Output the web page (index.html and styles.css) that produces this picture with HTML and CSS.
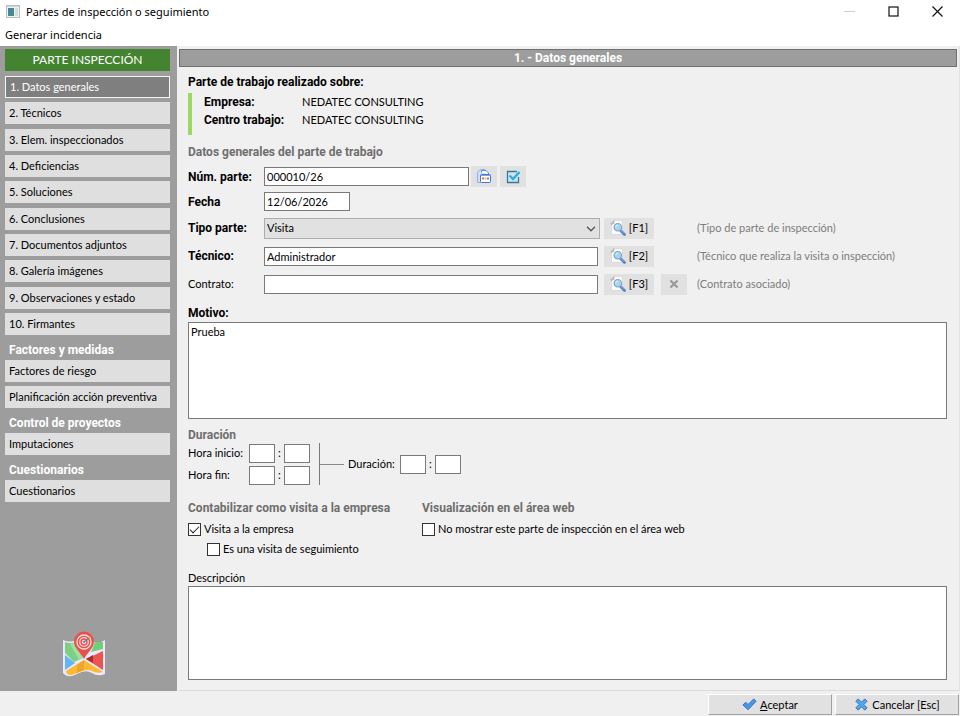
FILE: index.html
```
<!DOCTYPE html>
<html lang="es">
<head>
    <meta charset="UTF-8">
    <meta name="viewport" content="width=device-width, initial-scale=1.0">
    <title>Partes de inspección o seguimiento</title>
    <link rel="stylesheet" href="styles.css">
</head>
<body>
    <svg class="symbols" aria-hidden="true">
        <symbol id="icon-search" viewBox="0 0 16 16">
            <path d="M4.500 .5H12.500V14.500H1.500V3.500Z" fill="#fbfbfb" stroke="#dcdcdc"/>
            <path d="M1 4.500V3.500L4 .5V3.500Z" fill="#c4c4c4" stroke="#aaa" stroke-width=".6"/>
            <path d="M10.500 10.500L14.500 14.500" stroke="#4f7fc8" stroke-width="2.600" stroke-linecap="round"/>
            <path d="M10.500 10L14 13.500" stroke="#9cc0ee" stroke-width=".8"/>
            <circle cx="7.800" cy="7.200" r="3.700" fill="#a9d4ee" stroke="#7fa6c9" stroke-width="1.200"/>
            <path d="M5.800 7a2 2 0 0 1 2-2" fill="none" stroke="#e6f6ff"/>
        </symbol>
    </svg>

    <header class="titlebar">
        <svg class="app-icon" viewBox="0 0 14 13">
            <rect x=".5" y=".5" width="13" height="12" fill="#eef1f2" stroke="#b9bfc3"/>
            <rect x="1" y="1" width="12" height="1" fill="#ccd4da"/>
            <rect x="2" y="3" width="6" height="8" fill="#3f8f86"/>
            <rect x="2" y="3" width="3" height="5" fill="#4b7fa6"/>
            <rect x="9" y="3" width="3" height="8" fill="#d3dde0"/>
        </svg>
        <h1 class="title">Partes de inspección o seguimiento</h1>
        <div class="window-buttons">
            <button type="button" aria-label="Minimizar" disabled>
                <svg viewBox="0 0 11 11"><path d="M0 5.500H11" stroke="#cfcfcf"/></svg>
            </button>
            <button type="button" aria-label="Maximizar">
                <svg viewBox="0 0 11 11"><rect x="1" y="1" width="9" height="9" fill="none" stroke="#111" stroke-width="1.200"/></svg>
            </button>
            <button type="button" aria-label="Cerrar">
                <svg viewBox="0 0 11 11"><path d="M.5 .5L10.500 10.500M10.500 .5L.5 10.500" stroke="#111" stroke-width="1.200"/></svg>
            </button>
        </div>
    </header>

    <nav class="menubar">
        <button type="button">Generar incidencia</button>
    </nav>

    <div class="workspace">
        <aside class="sidebar">
            <h2 class="sidebar-title">PARTE INSPECCIÓN</h2>
            <nav class="nav-group sections">
                <button type="button" class="nav-item active">1. Datos generales</button>
                <button type="button" class="nav-item">2. Técnicos</button>
                <button type="button" class="nav-item">3. Elem. inspeccionados</button>
                <button type="button" class="nav-item">4. Deficiencias</button>
                <button type="button" class="nav-item">5. Soluciones</button>
                <button type="button" class="nav-item">6. Conclusiones</button>
                <button type="button" class="nav-item">7. Documentos adjuntos</button>
                <button type="button" class="nav-item">8. Galería imágenes</button>
                <button type="button" class="nav-item">9. Observaciones y estado</button>
                <button type="button" class="nav-item">10. Firmantes</button>
            </nav>
            <h3 class="nav-heading">Factores y medidas</h3>
            <nav class="nav-group">
                <button type="button" class="nav-item">Factores de riesgo</button>
                <button type="button" class="nav-item">Planificación acción preventiva</button>
            </nav>
            <h3 class="nav-heading">Control de proyectos</h3>
            <nav class="nav-group">
                <button type="button" class="nav-item">Imputaciones</button>
            </nav>
            <h3 class="nav-heading">Cuestionarios</h3>
            <nav class="nav-group">
                <button type="button" class="nav-item">Cuestionarios</button>
            </nav>
            <svg class="map-logo" viewBox="0 0 44 46">
                <path d="M1 9Q8 12 14 9T28 10T43 9V43Q36 46 30 42T15 43T1 42Z" fill="#e9e9fb"/>
                <path d="M3 11Q8 13 14 11L21 27L12 31L3 22Z" fill="#7bd081"/>
                <path d="M8 13L14 11L21 27L17 29Z" fill="#a0dfa3"/>
                <path d="M3 24L13 32L3 39Z" fill="#64b5f6"/>
                <path d="M33 11L41 11V18L29 21Z" fill="#6fd075"/>
                <path d="M41 20V39L24 28Z" fill="#ee5350"/>
                <path d="M24 28L31 24V32Z" fill="#a32f2f"/>
                <path d="M22 29L41 41Q35 43 30 40T15 42T4 40Z" fill="#fdb931"/>
                <path d="M15 34L22 29V39L15 42Z" fill="#eda62a"/>
                <path d="M22 28C19 22 12 17 12 10.500a10 10 0 0 1 20 0C32 17 25 22 22 28Z" fill="#ea4f4b"/>
                <g fill="none" stroke="#f9dedd" stroke-width="1.300">
                    <circle cx="22" cy="11" r="7"/>
                    <circle cx="22" cy="11" r="4.300"/>
                    <circle cx="22" cy="11" r="1.600"/>
                </g>
                <path d="M22 11L27 7" stroke="#6374b5" stroke-width="1.200"/>
                <path d="M26 7L28 5L29 7Z" fill="#f3b63c"/>
            </svg>
        </aside>

        <main class="panel">
            <h2 class="panel-title">1. - Datos generales</h2>
            <form class="form" id="parteForm">
                <h3 class="heading dark">Parte de trabajo realizado sobre:</h3>
                <dl class="company">
                    <dt>Empresa:</dt>
                    <dd>NEDATEC CONSULTING</dd>
                    <dt>Centro trabajo:</dt>
                    <dd>NEDATEC CONSULTING</dd>
                </dl>

                <h3 class="heading">Datos generales del parte de trabajo</h3>
                <div class="row">
                    <label class="bold" for="numero">Núm. parte:</label>
                    <input class="number" type="text" id="numero" value="000010/26">
                    <button type="button" class="icon-button" aria-label="Numeración">
                        <svg viewBox="0 0 16 16">
                            <path d="M1.500 3L5 .5H9V13.500H1.500Z" fill="#cfe0fb" stroke="#94b2e8"/>
                            <path d="M5.500 3.500V1.500H10L12.500 4V6" fill="#fff" stroke="#5c8edf"/>
                            <rect x="4.500" y="5.500" width="10" height="8" rx="1" fill="#fff" stroke="#3f77d4"/>
                            <path d="M5 6.500H14" stroke="#79a5ec" stroke-width="1"/>
                            <path d="M6 9.500H8" stroke="#e26d5c" stroke-width="2"/>
                            <path d="M8.500 9.500H10.500" stroke="#f3b64c" stroke-width="2"/>
                            <path d="M11 9.500H13" stroke="#7a7fe0" stroke-width="2"/>
                        </svg>
                    </button>
                    <button type="button" class="icon-button" aria-label="Validar número">
                        <svg viewBox="0 0 16 16">
                            <path d="M12 2.500H2.500V13.500H13.500V8" fill="none" stroke="#2f7ba5" stroke-width="1.300"/>
                            <path d="M4.500 6.500L8 10L14.500 3" fill="none" stroke="#1fb1ea" stroke-width="2.400"/>
                        </svg>
                    </button>
                </div>
                <div class="row">
                    <label class="bold" for="fecha">Fecha</label>
                    <input class="date" type="text" id="fecha" value="12/06/2026">
                </div>
                <div class="row lookup">
                    <label class="bold" for="tipo">Tipo parte:</label>
                    <div class="select-box">
                        <select id="tipo">
                            <option>Visita</option>
                        </select>
                        <svg class="chevron" viewBox="0 0 10 6"><path d="M1 .8L5 4.800L9 .8" fill="none" stroke="#555" stroke-width="1.300"/></svg>
                    </div>
                    <button type="button" class="key-button"><svg><use href="#icon-search"/></svg>[F1]</button>
                    <span class="note">(Tipo de parte de inspección)</span>
                </div>
                <div class="row lookup">
                    <label class="bold" for="tecnico">Técnico:</label>
                    <input class="wide" type="text" id="tecnico" value="Administrador">
                    <button type="button" class="key-button"><svg><use href="#icon-search"/></svg>[F2]</button>
                    <span class="note">(Técnico que realiza la visita o inspección)</span>
                </div>
                <div class="row lookup">
                    <label for="contrato">Contrato:</label>
                    <input class="wide" type="text" id="contrato">
                    <button type="button" class="key-button"><svg><use href="#icon-search"/></svg>[F3]</button>
                    <button type="button" class="icon-button clear" aria-label="Quitar contrato">
                        <svg viewBox="0 0 16 16"><path d="M4.500 4.500L11.500 11.500M11.500 4.500L4.500 11.500" stroke="#999" stroke-width="2.200"/></svg>
                    </button>
                    <span class="note">(Contrato asociado)</span>
                </div>

                <label class="area-label bold" for="motivo">Motivo:</label>
                <textarea class="motivo" id="motivo">Prueba</textarea>

                <h3 class="heading">Duración</h3>
                <div class="times">
                    <div class="time-rows">
                        <div class="time">
                            <label for="inicioHora">Hora inicio:</label>
                            <input type="text" id="inicioHora"><span>:</span><input type="text" aria-label="Minutos de inicio">
                        </div>
                        <div class="time">
                            <label for="finHora">Hora fin:</label>
                            <input type="text" id="finHora"><span>:</span><input type="text" aria-label="Minutos de fin">
                        </div>
                    </div>
                    <div class="bracket"></div>
                    <div class="time total">
                        <label for="duracionHora">Duración:</label>
                        <input type="text" id="duracionHora"><span>:</span><input type="text" aria-label="Minutos de duración">
                    </div>
                </div>

                <div class="options">
                    <section>
                        <h3 class="heading">Contabilizar como visita a la empresa</h3>
                        <label class="check"><input type="checkbox" checked>Visita a la empresa</label>
                        <label class="check sub"><input type="checkbox">Es una visita de seguimiento</label>
                    </section>
                    <section>
                        <h3 class="heading">Visualización en el área web</h3>
                        <label class="check"><input type="checkbox">No mostrar este parte de inspección en el área web</label>
                    </section>
                </div>

                <label class="area-label" for="descripcion">Descripción</label>
                <textarea class="descripcion" id="descripcion"></textarea>
            </form>
        </main>
    </div>

    <footer class="actions">
        <button type="submit" form="parteForm">
            <svg viewBox="0 0 16 16"><path d="M1 8.500L4 5.500L6.500 8L12.500 2L15 4.500L6.500 13.500Z" fill="#4a97ea" stroke="#2b6cc4"/></svg>
            <span><u>A</u>ceptar</span>
        </button>
        <button type="button">
            <svg viewBox="0 0 16 16"><path d="M2 4.500L4.500 2L8 5.500L11.500 2L14 4.500L10.500 8L14 11.500L11.500 14L8 10.500L4.500 14L2 11.500L5.500 8Z" fill="#55a5ea" stroke="#2b72b8"/></svg>
            <span>Cancelar [Esc]</span>
        </button>
    </footer>
</body>
</html>
```

FILE: styles.css
```
/* General */
* {
    box-sizing: border-box;
}

body {
    margin: 0;
    min-height: 100vh;
    display: flex;
    flex-direction: column;
    background: #f0f0f0;
    color: #000;
    font-family: Lato, Roboto, sans-serif;
    font-size: 11px;
    line-height: 18px;
}

h1, h2, h3, dl, dd {
    margin: 0;
    font-size: 11px;
}

button, input, select, textarea {
    font: inherit;
    color: inherit;
    margin: 0;
    border-radius: 0;
}

button {
    border: none;
    padding: 0;
    background: none;
}

svg {
    display: block;
}

.symbols {
    position: absolute;
    width: 0;
    height: 0;
}

.bold, .heading, .nav-heading, .panel-title, .company dt {
    font-family: Roboto, sans-serif;
    font-size: 12px;
    font-weight: bold;
}

/* Window frame */
.titlebar {
    display: flex;
    align-items: center;
    height: 23px;
    padding-left: 6px;
    background: #fff;
}

.app-icon {
    width: 14px;
    height: 13px;
    margin-right: 6px;
}

.title {
    flex: 1;
    font-family: "Noto Sans", sans-serif;
    font-weight: normal;
}

.window-buttons {
    display: flex;
    margin-right: 1px;
}

.window-buttons button {
    width: 44px;
    height: 22px;
    display: flex;
    align-items: center;
    justify-content: center;
}

.window-buttons svg {
    width: 11px;
    height: 11px;
}

.menubar {
    height: 23px;
    padding-left: 5px;
    background: #fff;
    font-family: "Noto Sans", sans-serif;
}

.menubar button {
    line-height: 24px;
}

.workspace {
    flex: 1;
    display: flex;
}

/* Sidebar */
.sidebar {
    width: 177px;
    flex-shrink: 0;
    display: flex;
    flex-direction: column;
    padding: 3px 7px 14px 5px;
    background: #9d9d9d;
}

.sidebar-title {
    margin-bottom: 5px;
    background: #44832f;
    color: #fff;
    font-size: 12px;
    font-weight: normal;
    line-height: 22px;
    text-align: center;
}

.nav-group {
    display: flex;
    flex-direction: column;
    gap: 4px;
}

.nav-group.sections {
    min-height: 259px;
    justify-content: space-between;
}

.nav-item {
    height: 22px;
    padding: 0 4px;
    background: #dfdfdf;
    text-align: left;
}

.nav-item.active {
    border: 1px solid #f4f4f4;
    background: #7f7f7f;
    color: #fff;
}

.nav-heading {
    padding: 6px 4px 1px;
    color: #fff;
}

.map-logo {
    width: 44px;
    height: 46px;
    margin: auto auto 0 57px;
}

/* Main panel */
.panel {
    flex: 1;
    display: flex;
    flex-direction: column;
    margin-left: 2px;
    padding-top: 3px;
    border-right: 1px solid #e2e2e2;
    border-bottom: 1px solid #dcdcdc;
}

.panel-title {
    margin-right: 2px;
    border: 1px solid #707070;
    background: #9d9d9d;
    color: #fff;
    line-height: 16px;
    text-align: center;
}

.form {
    flex: 1;
    display: flex;
    flex-direction: column;
    padding: 7px 12px 10px 9px;
}

.heading {
    color: #6e6e6e;
    line-height: 16px;
}

.heading.dark {
    color: #000;
}

.company {
    display: grid;
    grid-template-columns: 98px 1fr;
    margin: 3px 0 9px;
    padding: 0 0 6px 12px;
    border-left: 4px solid #9bd864;
}

.heading + .row {
    margin-top: 4px;
}

.row {
    display: flex;
    align-items: center;
    min-height: 25px;
}

.row > label {
    width: 76px;
}

.row.lookup {
    min-height: 28px;
}

input[type="text"], textarea {
    padding: 0 2px;
    border: 1px solid #7a7a7a;
    background: #fff;
    outline: none;
}

input[type="text"] {
    height: 19px;
}

.number {
    width: 205px;
    margin-right: 2px;
}

.date {
    width: 86px;
}

.wide {
    width: 334px;
    margin-right: 6px;
}

.select-box {
    position: relative;
    width: 336px;
    margin-right: 4px;
}

.select-box select {
    display: block;
    width: 100%;
    height: 21px;
    padding: 0 2px;
    border: 1px solid #adadad;
    background: #e1e1e1;
    appearance: none;
}

.chevron {
    position: absolute;
    top: 8px;
    right: 4px;
    width: 10px;
    height: 6px;
    pointer-events: none;
}

.icon-button, .key-button {
    display: flex;
    align-items: center;
    justify-content: center;
    height: 21px;
    background: #e1e1e1;
}

.icon-button {
    width: 26px;
}

.icon-button + .icon-button {
    margin-left: 3px;
}

.icon-button svg, .key-button svg {
    width: 16px;
    height: 16px;
}

.key-button {
    width: 50px;
    gap: 3px;
}

.clear {
    margin-left: 7px;
}

.note {
    margin-left: 43px;
    color: #7d7d7d;
}

.clear + .note {
    margin-left: 10px;
}

.area-label {
    line-height: 17px;
}

.row + .area-label {
    margin-top: 7px;
}

textarea {
    display: block;
    width: 100%;
    resize: none;
}

.motivo {
    height: 97px;
    margin-bottom: 8px;
}

.descripcion {
    flex: 1;
    min-height: 94px;
}

/* Times */
.times {
    display: flex;
    align-items: center;
    margin-bottom: 15px;
}

.time-rows {
    display: flex;
    flex-direction: column;
    gap: 3px;
}

.time {
    display: flex;
    align-items: center;
    height: 19px;
}

.time label {
    width: 61px;
}

.time span {
    width: 9px;
    text-align: center;
}

.time input {
    width: 26px;
}

.time.total label {
    width: 52px;
}

/* Line joining both hours with the total */
.bracket {
    width: 25px;
    height: 42px;
    margin: 0 4px 0 9px;
    border-left: 1px solid #7a7a7a;
    background: linear-gradient(#8a8a8a, #8a8a8a) center / 100% 1px no-repeat;
}

/* Check boxes */
.options {
    display: grid;
    grid-template-columns: 234px 1fr;
    margin-bottom: 10px;
}

.options .heading {
    margin-bottom: 3px;
}

.check {
    display: flex;
    align-items: center;
    gap: 3px;
    height: 20px;
}

.check.sub {
    margin-left: 19px;
}

.check input {
    width: 13px;
    height: 13px;
    border: 1px solid #333;
    background: #fff;
    appearance: none;
}

.check input:checked::before {
    content: "";
    display: block;
    width: 8px;
    height: 4px;
    margin: 2px 1px;
    border-left: 1px solid #222;
    border-bottom: 1px solid #222;
    transform: rotate(-45deg);
}

/* Footer */
.actions {
    display: flex;
    justify-content: flex-end;
    gap: 3px;
    padding: 3px 1px 1px 0;
}

.actions button {
    display: flex;
    align-items: center;
    justify-content: center;
    gap: 3px;
    width: 124px;
    height: 21px;
    border: 1px solid;
    border-color: #fff #a0a0a0 #a0a0a0 #fff;
    background: #e1e1e1;
}

.actions svg {
    width: 15px;
    height: 15px;
}
```
